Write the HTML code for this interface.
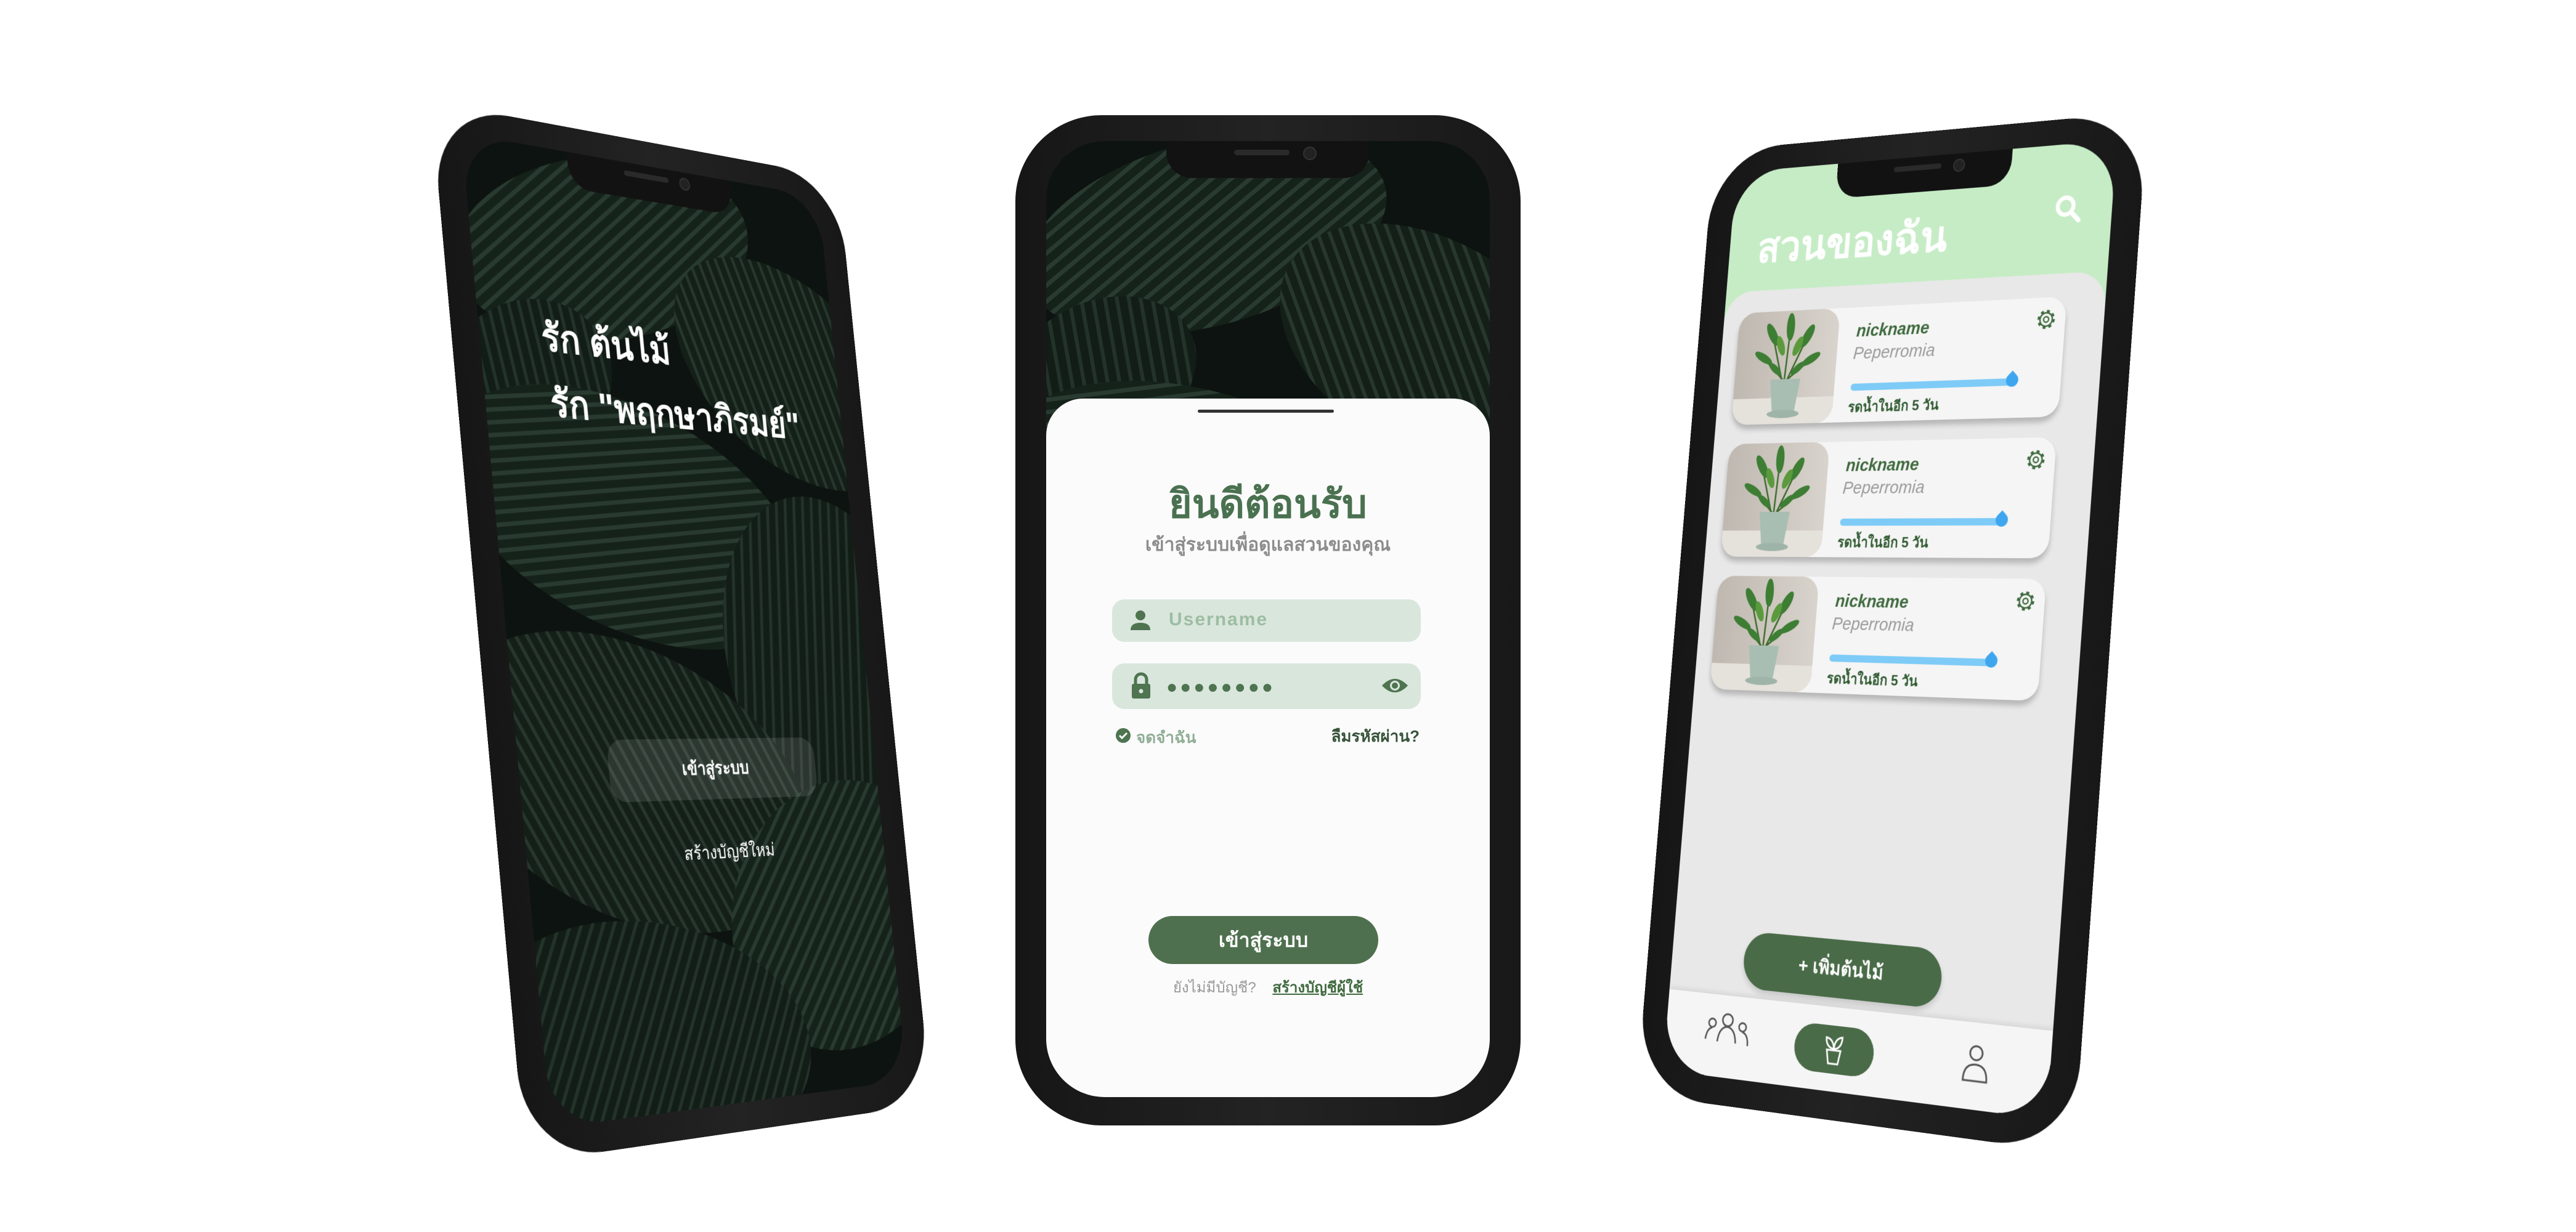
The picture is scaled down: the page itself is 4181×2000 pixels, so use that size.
<!DOCTYPE html>
<html><head><meta charset="utf-8">
<style>
html,body{margin:0;padding:0;background:#fff;}
body{width:4181px;height:2000px;position:relative;overflow:hidden;font-family:"Liberation Sans","Noto Sans CJK SC",sans-serif;}
.phone{position:absolute;left:0;top:0;width:820px;height:1640px;transform-origin:0 0;background:linear-gradient(90deg,#161616,#232323 50%,#181818);border-radius:140px;}
.screen{position:absolute;left:50px;top:42px;width:720px;height:1552px;border-radius:95px;overflow:hidden;}
.notch{position:absolute;left:195px;top:0;width:330px;height:60px;background:#121212;border-radius:0 0 42px 42px;}
.notch .spk{position:absolute;left:110px;top:14px;width:90px;height:9px;border-radius:5px;background:#2a2a2a;}
.notch .cam{position:absolute;left:222px;top:9px;width:18px;height:18px;border-radius:50%;background:#222;border:2px solid #333;}
.abs{position:absolute;}
.leafbg{position:absolute;left:0;top:0;width:720px;height:1552px;}
.card{position:absolute;left:32px;width:620px;height:195px;background:#f5f5f5;border-radius:32px;box-shadow:0 8px 10px rgba(0,0,0,.22);}
.card .img{position:absolute;left:0;top:0;width:200px;height:195px;border-radius:32px;overflow:hidden;}
.card .nn{position:absolute;left:235px;top:24px;font-size:30px;font-weight:bold;font-style:italic;color:#3f6a3e;}
.card .sp{position:absolute;left:232px;top:62px;font-size:30px;font-style:italic;color:#9a9a9a;}
.card .bar{position:absolute;left:232px;top:130px;width:300px;height:12px;border-radius:6px;background:#7ecbf7;}
.card .drop{position:absolute;left:522px;top:122px;width:22px;height:22px;border-radius:50% 0 50% 50%;transform:rotate(-45deg);background:#3ea6ef;}
.card .wt{position:absolute;left:230px;top:150px;font-size:24px;color:#2f5a30;font-weight:bold;}
.card .gear{position:absolute;left:566px;top:16px;}
</style></head><body>

<svg width="0" height="0" style="position:absolute">
<defs>
<pattern id="pA" patternUnits="userSpaceOnUse" width="20" height="20" patternTransform="rotate(65)"><rect width="20" height="20" fill="#1f3126"/><rect width="7" height="20" fill="#3c5546"/></pattern>
<pattern id="pB" patternUnits="userSpaceOnUse" width="18" height="18" patternTransform="rotate(-50)"><rect width="18" height="18" fill="#1c2d22"/><rect width="6" height="18" fill="#384f42"/></pattern>
<pattern id="pC" patternUnits="userSpaceOnUse" width="19" height="19" patternTransform="rotate(15)"><rect width="19" height="19" fill="#1b2a21"/><rect width="6" height="19" fill="#334a3d"/></pattern>
<g id="leaves">
<rect width="720" height="1552" fill="#141c17"/>
<ellipse cx="260" cy="150" rx="300" ry="150" transform="rotate(-15 260 150)" fill="url(#pA)"/>
<ellipse cx="620" cy="330" rx="260" ry="170" transform="rotate(30 620 330)" fill="url(#pB)"/>
<ellipse cx="90" cy="380" rx="160" ry="120" transform="rotate(-25 90 380)" fill="url(#pC)"/>
<ellipse cx="260" cy="600" rx="350" ry="190" transform="rotate(18 260 600)" fill="url(#pA)"/>
<ellipse cx="640" cy="820" rx="220" ry="280" transform="rotate(-10 640 820)" fill="url(#pC)"/>
<ellipse cx="220" cy="1030" rx="360" ry="220" transform="rotate(22 220 1030)" fill="url(#pB)"/>
<ellipse cx="620" cy="1260" rx="250" ry="220" transform="rotate(-30 620 1260)" fill="url(#pA)"/>
<ellipse cx="200" cy="1440" rx="320" ry="190" transform="rotate(10 200 1440)" fill="url(#pC)"/>
<rect width="720" height="1552" fill="#000" opacity="0.3"/>
</g>
<g id="plant">
<defs><linearGradient id="pbg" x1="0" y1="0" x2="1" y2="0"><stop offset="0" stop-color="#bfb8b0"/><stop offset="1" stop-color="#d8d3cc"/></linearGradient></defs>
<rect width="200" height="195" fill="url(#pbg)"/>
<rect y="150" width="200" height="45" fill="#e5e1db"/>
<g stroke="#3d6b2c" stroke-width="3" fill="none"><path d="M95 120 L70 40"/><path d="M100 120 L105 25"/><path d="M105 120 L140 45"/><path d="M98 120 L55 80"/><path d="M104 120 L150 85"/></g>
<g fill="#3d7d34"><ellipse cx="70" cy="40" rx="8" ry="22" transform="rotate(-30 70 40)"/><ellipse cx="105" cy="28" rx="8" ry="24"/><ellipse cx="140" cy="45" rx="8" ry="22" transform="rotate(30 140 45)"/><ellipse cx="55" cy="80" rx="7" ry="20" transform="rotate(-60 55 80)"/><ellipse cx="150" cy="85" rx="7" ry="20" transform="rotate(60 150 85)"/><ellipse cx="88" cy="60" rx="7" ry="18" transform="rotate(-20 88 60)" fill="#5a9a3c"/><ellipse cx="122" cy="62" rx="7" ry="18" transform="rotate(25 122 62)" fill="#5a9a3c"/><ellipse cx="80" cy="100" rx="6" ry="16" transform="rotate(-50 80 100)"/><ellipse cx="125" cy="100" rx="6" ry="16" transform="rotate(50 125 100)"/></g>
<path d="M72 118 L132 118 L124 175 L80 175 Z" fill="#a9beb2"/>
<ellipse cx="102" cy="178" rx="32" ry="7" fill="#9fb4a8"/>
</g>
<g id="gear"><circle cx="20" cy="20" r="13" fill="none" stroke="#3f6a3e" stroke-width="5" stroke-dasharray="5 5.2"/><circle cx="20" cy="20" r="11" fill="#f5f5f5" stroke="#3f6a3e" stroke-width="2.5"/><circle cx="20" cy="20" r="4.5" fill="none" stroke="#3f6a3e" stroke-width="2.5"/></g>
</defs>
</svg>

<!-- Phone 1 -->
<div class="phone" style="transform:matrix3d(1.04441,0.200463,0,0.00017523,0.078244,1.015951,0,-0.000018358,0,0,1,0,699,165,0,1);">
  <div class="screen">
    <svg class="leafbg" viewBox="0 0 720 1552"><use href="#leaves"/></svg>
    <div class="notch"><div class="spk"></div><div class="cam"></div></div>
    <div class="abs" style="left:114px;top:262px;font-size:64px;font-weight:bold;color:#fff;white-space:nowrap;">รัก ต้นไม้</div>
    <div class="abs" style="left:120px;top:368px;font-size:64px;font-weight:bold;color:#fff;white-space:nowrap;">รัก "พฤกษาภิรมย์"</div>
    <div class="abs" style="left:166px;top:958px;width:420px;height:100px;border-radius:30px;background:rgba(255,255,255,0.11);color:#fff;font-size:30px;font-weight:bold;text-align:center;line-height:100px;">เข้าสู่ระบบ</div>
    <div class="abs" style="left:189px;top:1122px;width:400px;text-align:center;font-size:30px;color:#fff;">สร้างบัญชีใหม่</div>
  </div>
</div>

<!-- Phone 2 -->
<div class="phone" style="left:1648px;top:187px;">
  <div class="screen">
    <svg class="leafbg" viewBox="0 0 720 1552"><use href="#leaves"/></svg>
    <div class="notch"><div class="spk"></div><div class="cam"></div></div>
    <div class="abs" style="left:0;top:418px;width:720px;height:1134px;background:#fbfbfb;border-radius:60px 60px 0 0;">
      <div class="abs" style="left:246px;top:18px;width:221px;height:5px;border-radius:3px;background:#333;"></div>
      <div class="abs" style="left:0;top:120px;width:720px;text-align:center;font-size:64px;font-weight:bold;color:#4a7150;">ยินดีต้อนรับ</div>
      <div class="abs" style="left:0;top:214px;width:720px;text-align:center;font-size:30px;font-weight:bold;color:#8c8c8c;">เข้าสู่ระบบเพื่อดูแลสวนของคุณ</div>
      <div class="abs" style="left:107px;top:326px;width:501px;height:69px;border-radius:20px;background:#d9e6dc;">
        <svg class="abs" style="left:28px;top:16px" width="36" height="36" viewBox="0 0 36 36"><circle cx="18" cy="10" r="8" fill="#4e7450"/><path d="M2 34 Q2 22 18 22 Q34 22 34 34 Z" fill="#4e7450"/></svg>
        <div class="abs" style="left:92px;top:16px;font-size:30px;font-weight:bold;color:#9dbda3;letter-spacing:2px;">Username</div>
      </div>
      <div class="abs" style="left:107px;top:430px;width:501px;height:74px;border-radius:20px;background:#d9e6dc;">
        <svg class="abs" style="left:30px;top:14px" width="34" height="44" viewBox="0 0 34 44"><path d="M8 20 V12 A9 9 0 0 1 26 12 V20" fill="none" stroke="#4e7450" stroke-width="5"/><rect x="2" y="19" width="30" height="24" rx="3" fill="#4e7450"/><circle cx="17" cy="31" r="3.5" fill="#d9e6dc"/></svg>
        <div class="abs" style="left:88px;top:22px;font-size:30px;color:#4e7450;letter-spacing:4px;">●●●●●●●●</div>
        <svg class="abs" style="left:436px;top:20px" width="46" height="32" viewBox="0 0 46 32"><path d="M2 16 Q23 -6 44 16 Q23 38 2 16 Z" fill="#4e7450"/><circle cx="23" cy="16" r="8" fill="#d9e6dc"/><circle cx="23" cy="16" r="5" fill="#4e7450"/></svg>
      </div>
      <svg class="abs" style="left:112px;top:534px" width="26" height="26" viewBox="0 0 26 26"><circle cx="13" cy="13" r="12" fill="#4e7450"/><path d="M7 13 L11 17 L19 9" fill="none" stroke="#fff" stroke-width="3"/></svg>
      <div class="abs" style="left:146px;top:530px;font-size:26px;font-weight:bold;color:#8fae95;">จดจำฉัน</div>
      <div class="abs" style="left:380px;top:528px;width:226px;text-align:right;font-size:26px;font-weight:bold;color:#37533a;">ลืมรหัสผ่าน?</div>
      <div class="abs" style="left:166px;top:840px;width:373px;height:78px;border-radius:39px;background:#4f704f;color:#fff;text-align:center;line-height:78px;font-size:32px;font-weight:bold;">เข้าสู่ระบบ</div>
      <div class="abs" style="left:0;top:936px;width:720px;text-align:center;font-size:24px;white-space:nowrap;"><span style="color:#9a9a9a;">ยังไม่มีบัญชี?</span>&nbsp;&nbsp;&nbsp;&nbsp;<span style="color:#3f6a3e;text-decoration:underline;font-weight:bold;">สร้างบัญชีผู้ใช้</span></div>
    </div>
  </div>
</div>

<!-- Phone 3 -->
<div class="phone" style="transform:matrix3d(0.462134,-0.098634,0,-0.00011371,-0.116037,0.907317,0,-0.000014762,0,0,1,0,2782,245,0,1);">
  <div class="screen" style="background:#c6ecc6;">
    <div class="abs" style="left:57px;top:78px;font-size:74px;font-weight:bold;color:#fff;white-space:nowrap;">สวนของฉัน</div>
    <svg class="abs" style="left:618px;top:82px" width="50" height="50" viewBox="0 0 50 50"><circle cx="20" cy="20" r="14" fill="none" stroke="#fff" stroke-width="7"/><path d="M30 30 L44 44" stroke="#fff" stroke-width="8" stroke-linecap="round"/></svg>
    <div class="abs" style="left:0;top:212px;width:720px;height:1340px;background:#e8e8e8;border-radius:55px 55px 0 0;"></div>
    <div class="card" style="top:250px;"><div class="img"><svg width="200" height="195"><use href="#plant"/></svg></div><div class="nn">nickname</div><div class="sp">Peperromia</div><div class="bar"></div><div class="drop"></div><div class="wt">รดน้ำในอีก 5 วัน</div><svg class="gear" width="40" height="40"><use href="#gear"/></svg></div>
    <div class="card" style="top:478px;"><div class="img"><svg width="200" height="195"><use href="#plant"/></svg></div><div class="nn">nickname</div><div class="sp">Peperromia</div><div class="bar"></div><div class="drop"></div><div class="wt">รดน้ำในอีก 5 วัน</div><svg class="gear" width="40" height="40"><use href="#gear"/></svg></div>
    <div class="card" style="top:706px;"><div class="img"><svg width="200" height="195"><use href="#plant"/></svg></div><div class="nn">nickname</div><div class="sp">Peperromia</div><div class="bar"></div><div class="drop"></div><div class="wt">รดน้ำในอีก 5 วัน</div><svg class="gear" width="40" height="40"><use href="#gear"/></svg></div>
    <div class="abs" style="left:144px;top:1305px;width:374px;height:95px;border-radius:48px;background:#4a6b48;color:#fff;text-align:center;line-height:95px;font-size:32px;font-weight:bold;box-shadow:0 6px 10px rgba(0,0,0,.15);">+ เพิ่มต้นไม้</div>
    <div class="abs" style="left:0;top:1415px;width:720px;height:137px;background:#f5f5f5;box-shadow:0 -4px 8px rgba(0,0,0,.08);">
      <svg class="abs" style="left:72px;top:28px" width="100" height="60" viewBox="0 0 100 60" fill="none" stroke="#555" stroke-width="3"><circle cx="20" cy="20" r="7"/><path d="M8 48 Q10 30 20 28"/><circle cx="50" cy="13" r="10"/><path d="M32 50 Q34 26 50 24 Q66 26 68 50"/><circle cx="80" cy="22" r="7"/><path d="M80 30 Q92 32 92 52"/></svg>
      <div class="abs" style="left:255px;top:30px;width:150px;height:78px;border-radius:39px;background:#4a6b48;">
        <svg class="abs" style="left:50px;top:12px" width="50" height="54" viewBox="0 0 50 54" fill="none" stroke="#fff" stroke-width="3"><path d="M25 26 Q10 24 10 8 Q24 10 25 26 Z"/><path d="M25 26 Q40 24 40 6 Q26 8 25 26 Z"/><path d="M12 28 H38 L34 50 H16 Z"/></svg>
      </div>
      <svg class="abs" style="left:565px;top:32px" width="50" height="64" viewBox="0 0 50 64" fill="none" stroke="#555" stroke-width="3"><circle cx="25" cy="16" r="11"/><path d="M4 60 Q4 34 25 34 Q46 34 46 60 Z"/></svg>
    </div>
    <div class="notch" style="left:205px;"><div class="spk"></div><div class="cam"></div></div>
  </div>
</div>

</body></html>
